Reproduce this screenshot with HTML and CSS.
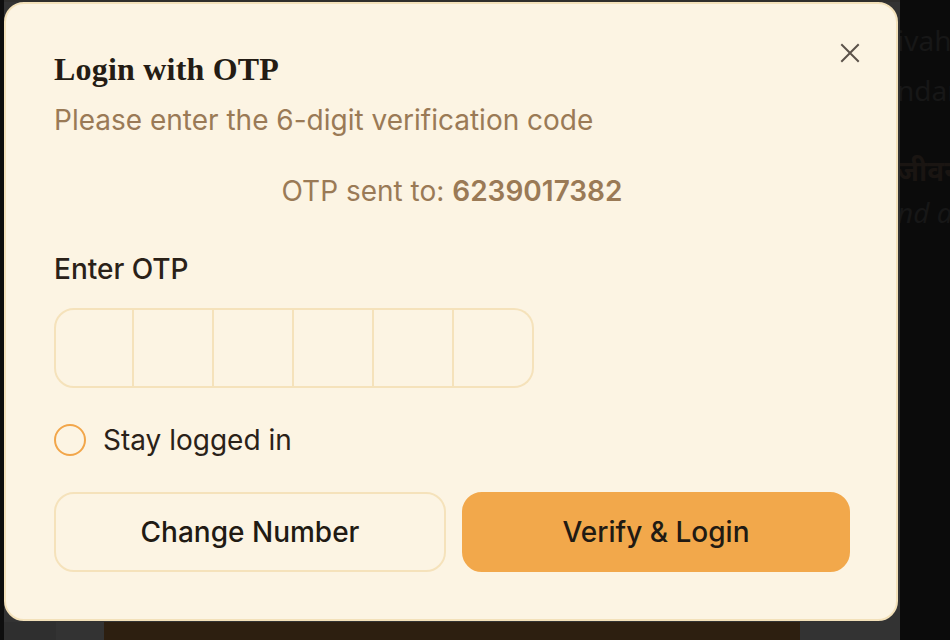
FILE: index.html
```html
<!DOCTYPE html>
<html lang="en">
<head>
<meta charset="utf-8">
<title>Login with OTP</title>
<link rel="stylesheet" href="styles.css">
</head>
<body>
<div class="page">
  <div class="gutter"></div>
  <div class="panel">
    <div class="panel-top"></div>
    <div class="panel-bottom">
      <div class="bottom-left"></div>
      <div class="bottom-bar"></div>
    </div>
  </div>
  <div class="side">
    <p class="side-line">ivah</p>
    <p class="side-line">ndari</p>
    <p class="side-line side-bold">जीवन</p>
    <p class="side-line side-italic">nd a</p>
  </div>
</div>

<div class="modal" role="dialog" aria-labelledby="otp-title">
  <button class="close" type="button" aria-label="Close">
    <svg width="20" height="20" viewBox="0 0 20 20" fill="none" stroke="currentColor" stroke-width="2" stroke-linecap="square"><path d="M2 2 18 18M18 2 2 18"/></svg>
  </button>
  <h2 class="title" id="otp-title">Login with OTP</h2>
  <p class="subtitle">Please enter the 6-digit verification code</p>
  <p class="sent">OTP sent to: <strong>6239017382</strong></p>
  <label class="label">Enter OTP</label>
  <div class="otp">
    <div class="slot"></div>
    <div class="slot"></div>
    <div class="slot"></div>
    <div class="slot"></div>
    <div class="slot"></div>
    <div class="slot"></div>
  </div>
  <div class="stay">
    <span class="radio"></span>
    <span class="stay-text">Stay logged in</span>
  </div>
  <div class="actions">
    <button class="btn btn-outline" type="button">Change Number</button>
    <button class="btn btn-primary" type="button">Verify &amp; Login</button>
  </div>
</div>
</body>
</html>
```

FILE: styles.css
```css
* { box-sizing: border-box; }

html, body {
  margin: 0;
  padding: 0;
}

body {
  width: 950px;
  height: 640px;
  overflow: hidden;
  background: #0b0b0b;
  font-family: Inter, "Noto Sans", "Liberation Sans", sans-serif;
  position: relative;
}

.page {
  display: flex;
  height: 640px;
}

.gutter {
  width: 4px;
  flex: none;
  background: #0e0e0e;
}

.panel {
  width: 896px;
  flex: none;
  background: #333333;
  display: flex;
  flex-direction: column;
}

.panel-top {
  height: 2px;
  background: #2f2e2c;
}

.panel-bottom {
  margin-top: auto;
  height: 18px;
  display: flex;
}

.bottom-left {
  width: 52px;
  background: #2f2f2f;
}

.bottom-bar {
  margin-left: 48px;
  width: 696px;
  background: #2d1f10;
}

.side {
  flex: 1;
  overflow: hidden;
  white-space: nowrap;
  padding-top: 22px;
  color: #171717;
  font-family: "Noto Sans", "DejaVu Sans", sans-serif;
  font-size: 28px;
}

.side-line {
  margin: 0 0 0 -3px;
  height: 50px;
  line-height: 36px;
}

.side-bold {
  margin-top: 30px;
  font-weight: 700;
  color: #1a1512;
  font-family: "Noto Sans", "DejaVu Sans", sans-serif;
}

.side-italic {
  font-style: italic;
  margin-top: -8px;
}

.modal {
  position: absolute;
  left: 4px;
  top: 2px;
  width: 894px;
  height: 619px;
  background: #fcf4e3;
  border: 2px solid #f3e1ba;
  border-radius: 20px;
  padding: 45px 46px 48px 48px;
  display: flex;
  flex-direction: column;
}

.close {
  position: absolute;
  top: 39px;
  right: 36px;
  width: 20px;
  height: 20px;
  padding: 0;
  border: 0;
  background: none;
  color: #5b524a;
  display: flex;
}

.title {
  margin: 0;
  font-family: "Liberation Serif", "DejaVu Serif", serif;
  font-weight: 700;
  font-size: 32px;
  line-height: 40px;
  color: #241c14;
  letter-spacing: 0.2px;
}

.subtitle {
  margin: 13px 0 0;
  font-size: 28px;
  line-height: 36px;
  color: #9a7a56;
}

.sent {
  margin: 35px 0 0;
  text-align: center;
  font-size: 28px;
  line-height: 36px;
  color: #9a7a56;
}

.sent strong {
  font-weight: 600;
}

.label {
  margin-top: 42px;
  font-size: 28px;
  line-height: 36px;
  font-weight: 500;
  color: #2a2118;
}

.otp {
  margin-top: 21px;
  display: flex;
  width: 480px;
  height: 80px;
}

.slot {
  width: 80px;
  height: 80px;
  border-top: 2px solid #f5e2bb;
  border-bottom: 2px solid #f5e2bb;
  border-right: 2px solid #f5e2bb;
}

.slot:first-child {
  border-left: 2px solid #f5e2bb;
  border-radius: 20px 0 0 20px;
}

.slot:last-child {
  border-radius: 0 20px 20px 0;
}

.stay {
  margin-top: 34px;
  display: flex;
  align-items: center;
  gap: 17px;
  height: 36px;
}

.radio {
  width: 32px;
  height: 32px;
  border: 2px solid #f2a64a;
  border-radius: 50%;
  flex: none;
}

.stay-text {
  font-size: 28px;
  line-height: 36px;
  color: #2a2118;
}

.actions {
  margin-top: 34px;
  display: flex;
  gap: 16px;
}

.btn {
  height: 80px;
  border-radius: 20px;
  font-family: Inter, "Noto Sans", sans-serif;
  font-size: 28px;
  font-weight: 500;
  color: #211a13;
  padding: 0;
}

.btn-outline {
  flex: 0 0 392px;
  background: #fcf4e3;
  border: 2px solid #f5e2bb;
}

.btn-primary {
  flex: 1;
  background: #f2a84b;
  border: 2px solid #f2a84b;
}
```
